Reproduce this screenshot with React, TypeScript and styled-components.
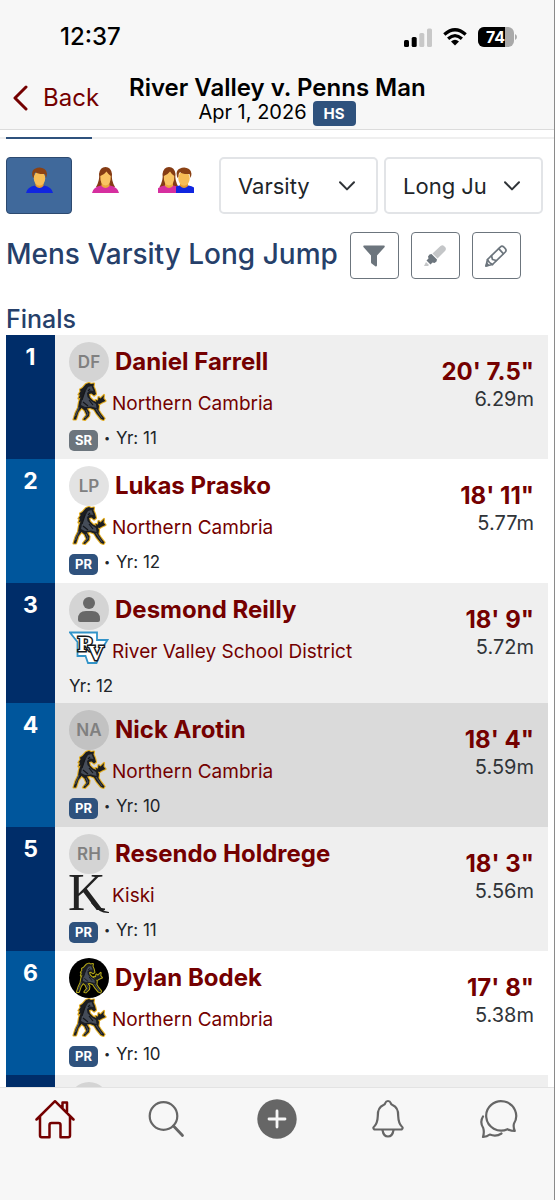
import React from 'react';
import styled, { createGlobalStyle } from 'styled-components';

const GlobalStyle = createGlobalStyle`
  *, *::before, *::after { box-sizing: border-box; }
  body { margin: 0; background: #fff; }
  body, button, select { font-family: Inter, 'Liberation Sans', sans-serif; }
  h1, h2, p { margin: 0; }
`;

const maroon = '#740000';
const navy = '#26406a';

const Screen = styled.div`
  display: flex;
  flex-direction: column;
  height: 100vh;
  background: #fff;
  border-right: 1px solid #8a8a8a;
`;

const Header = styled.header`
  flex: none;
  background: #f7f7f7;
  border-bottom: 1px solid #dcdcdc;
`;

const StatusBar = styled.div`
  display: flex;
  align-items: center;
  justify-content: space-between;
  height: 74px;
  padding: 0 37px 0 60px;
`;

const Clock = styled.time`
  font-size: 24px;
  font-weight: 500;
  line-height: 28px;
  color: #000;
`;

const StatusIcons = styled.div`
  display: flex;
  align-items: center;
  gap: 11px;
`;

const NavBar = styled.div`
  display: grid;
  grid-template-columns: 116px minmax(0, 1fr) 114px;
  align-items: start;
  height: 55px;
`;

const BackButton = styled.button`
  display: flex;
  align-items: center;
  gap: 15px;
  padding: 9px 0 0 12px;
  border: 0;
  background: none;
  color: ${maroon};
  font-size: 24px;
  line-height: 30px;
`;

const MeetInfo = styled.div`
  padding: 0 15px 0 13px;
  text-align: center;
`;

const MeetTitle = styled.h1`
  overflow: hidden;
  white-space: nowrap;
  text-align: left;
  font-size: 24px;
  font-weight: 600;
  line-height: 27px;
  color: #000;
`;

const MeetDate = styled.div`
  display: flex;
  align-items: flex-start;
  justify-content: center;
  gap: 6px;
  font-size: 20px;
  line-height: 22px;
  color: #000;
`;

const Badge = styled.span<{ $tone?: string; $large?: boolean }>`
  padding: 0 ${p => (p.$large ? 11 : 6)}px;
  border-radius: ${p => (p.$large ? 4 : 5)}px;
  background: ${p => p.$tone ?? '#2f527d'};
  color: #fff;
  font-size: ${p => (p.$large ? 15 : 13)}px;
  font-weight: 700;
  line-height: ${p => (p.$large ? 25 : 21)}px;
`;

const Main = styled.main`
  flex: 1;
  min-height: 0;
  overflow: hidden auto;
  scrollbar-width: none;
`;

const TabTrack = styled.div`
  margin-top: 7px;
  padding-left: 6px;
  background: #efefef;
`;

const TabMarker = styled.div`
  width: 86px;
  height: 2px;
  background: #2f527d;
`;

const Filters = styled.div`
  display: flex;
  gap: 6px;
  padding: 18px 11px 0 6px;
`;

const GenderGroup = styled.div`
  display: flex;
  flex: 1;
`;

const GenderButton = styled.button<{ $active?: boolean }>`
  display: flex;
  flex: 1 1 auto;
  justify-content: center;
  height: 57px;
  padding: 9px 18px 0;
  border: 1px solid ${p => (p.$active ? '#2d4a70' : 'transparent')};
  border-radius: 4px;
  background: ${p => (p.$active ? '#40699b' : 'transparent')};
`;

const SelectBox = styled.label`
  display: grid;
  align-items: center;
  width: 159px;
  color: #212529;

  > * { grid-area: 1 / 1; }
  > svg { justify-self: end; margin-right: 23px; pointer-events: none; }
`;

const Select = styled.select`
  appearance: none;
  width: 100%;
  height: 57px;
  padding: 0 53px 0 17px;
  border: 2px solid #e2e4e7;
  border-radius: 5px;
  background: #fff;
  color: #212529;
  font-size: 22px;
`;

const EventBar = styled.div`
  display: flex;
  align-items: center;
  gap: 12px;
  padding: 18px 6px 0;
`;

const EventTitle = styled.h2`
  padding-bottom: 4px;
  color: ${navy};
  font-size: 28px;
  font-weight: 500;
  line-height: 34px;
  white-space: nowrap;
`;

const ToolButton = styled.button`
  display: grid;
  flex: none;
  place-items: center;
  width: 49px;
  height: 47px;
  padding: 0;
  border: 1px solid #6c757d;
  border-radius: 4px;
  background: #fff;
`;

const Results = styled.table`
  width: calc(100% - 12px);
  margin: 24px 6px 0;
  border-collapse: collapse;
`;

const Round = styled.caption`
  color: ${navy};
  font-size: 25px;
  font-weight: 500;
  line-height: 32px;
  text-align: left;
`;

const Row = styled.tr<{ $shade: string; $rank: string }>`
  background: ${p => p.$shade};
  th { background: ${p => p.$rank}; }
`;

const Rank = styled.th`
  width: 49px;
  padding: 8px 0 0;
  vertical-align: top;
  color: #fff;
  font-size: 23px;
  font-weight: 700;
  line-height: 28px;
`;

const Athlete = styled.td`
  padding: 7px 0 7px 14px;
`;

const Line = styled.div`
  display: flex;
  align-items: center;
  height: 40px;
`;

const Avatar = styled.span<{ $bg?: string }>`
  display: grid;
  flex: none;
  place-items: center;
  width: 40px;
  height: 40px;
  border-radius: 50%;
  background: ${p => p.$bg ?? 'rgba(0, 0, 0, 0.11)'};
  color: #808080;
  font-size: 17px;
  font-weight: 600;
`;

const NameLink = styled.a`
  margin-left: 6px;
  color: ${maroon};
  font-size: 24px;
  font-weight: 700;
  line-height: 30px;
  text-decoration: none;
`;

const TeamLink = styled.a`
  margin: 4px 0 0 3px;
  color: ${maroon};
  font-size: 19px;
  line-height: 26px;
  text-decoration: none;
`;

const Meta = styled.div`
  display: flex;
  align-items: flex-start;
  padding-top: 6px;
  color: #212529;
  font-size: 17px;
  line-height: 20px;

  ${Badge} { margin: 2px 0 1px; }
`;

const Dot = styled.span`
  width: 18px;
  text-align: center;
  font-size: 11px;
`;

const MarkCell = styled.td`
  padding: 22px 14px 0 0;
  vertical-align: top;
  text-align: right;
  white-space: nowrap;
`;

const MarkLink = styled.a`
  display: block;
  color: ${maroon};
  font-size: 24px;
  font-weight: 700;
  line-height: 30px;
  text-decoration: none;
`;

const Metric = styled.div`
  color: #303438;
  font-size: 20px;
  line-height: 24px;
`;

const TabBar = styled.nav`
  display: grid;
  flex: none;
  grid-template-columns: repeat(5, 1fr);
  align-items: start;
  padding: 11px 0 61px;
  border-top: 1px solid #e3e3e3;
  background: #f7f7f7;
`;

const TabLink = styled.a<{ $active?: boolean }>`
  display: grid;
  justify-items: center;
  color: ${p => (p.$active ? maroon : '#666')};
`;

const SignalIcon = () => (
  <svg width="28" height="19" viewBox="0 0 28 19">
    <rect x="0" y="12" width="5" height="7" rx="1.5" />
    <rect x="7.7" y="9" width="5" height="10" rx="1.5" />
    <rect x="15.3" y="5" width="5" height="14" rx="1.5" fill="#c8c8c8" />
    <rect x="23" y="0.5" width="5" height="18.5" rx="1.5" fill="#c8c8c8" />
  </svg>
);

const WifiIcon = () => (
  <svg width="24" height="18" viewBox="0 0 24 18" fill="none" stroke="#000" strokeWidth="3.2">
    <path d="M1.3 6.5Q12-3 22.7 6.5" />
    <path d="M5.1 10.7Q12 4.6 18.9 10.7" />
    <path d="M12 17.5L8 13.4Q12 10 16 13.4Z" fill="#000" stroke="none" />
  </svg>
);

const BatteryIcon = () => (
  <svg width="39" height="20" viewBox="0 0 39 20">
    <rect width="36" height="20" rx="6" fill="#a9a9a9" />
    <path d="M6 0H27V20H6A6 6 0 0 1 0 14V6A6 6 0 0 1 6 0Z" />
    <path d="M37 7Q39 8 39 10T37 13Z" fill="#a9a9a9" />
    <text x="17.5" y="15.5" fill="#fff" fontFamily="Inter, sans-serif" fontSize="16" fontWeight="700" textAnchor="middle">74</text>
  </svg>
);

const Chevron = () => (
  <svg width="16" height="10" viewBox="0 0 16 10" fill="none" stroke="#2f3337" strokeWidth="2" strokeLinecap="round" strokeLinejoin="round">
    <path d="M1 1.2L8 8.4L15 1.2" />
  </svg>
);

const Man = () => (
  <>
    <path d="M0 26Q1 20 9 18.5H18Q26 20 27 26Z" fill="#1026e0" />
    <path d="M9.5 16H17.5V19Q13.5 23 9.5 19Z" fill="#e59a2e" />
    <ellipse cx="13.5" cy="11.5" rx="5.7" ry="7.3" fill="#f7bd55" />
    <path d="M7 11Q4.5 4 9 1.8Q14-1 18.5 2Q22.5 5 20 11L19 7Q12 7.5 9.5 5Q8 6 7.8 10Z" fill="#8b4214" />
  </>
);

const Woman = () => (
  <>
    <path d="M4 20Q8 13 7 7Q8 0 13.5 0T20 7Q19 13 23 20L18 22H9Z" fill="#853c14" />
    <path d="M0 26Q1 20 9 18.5H18Q26 20 27 26Z" fill="#d62f9f" />
    <path d="M9.5 15H17.5V19Q13.5 23 9.5 19Z" fill="#eba63e" />
    <path d="M8.3 9Q12 8 14.5 4.5Q16 7 18.8 9Q19 18 13.5 18.5Q8 18 8.3 9Z" fill="#f9c363" />
  </>
);

const ManIcon = () => <svg width="27" height="26" viewBox="0 0 27 26"><Man /></svg>;
const WomanIcon = () => <svg width="27" height="26" viewBox="0 0 27 26"><Woman /></svg>;
const PairIcon = () => (
  <svg width="36" height="26" viewBox="0 0 36 26">
    <g transform="translate(-2.5 0)"><Woman /></g>
    <svg x="18" y="0" width="18" height="26" viewBox="5.5 0 18 26" overflow="hidden">
      <Man />
    </svg>
  </svg>
);

const FunnelIcon = () => (
  <svg width="22" height="22" viewBox="0 0 22 22" fill="#6c757d">
    <path d="M1 0.5H21Q22 0.5 21.7 2L14 10.5V20.5Q13.5 22 12.3 21.3L8.6 18.5Q8 18 8 17V10.5L0.4 2Q0 0.5 1 0.5Z" />
  </svg>
);

const HighlighterIcon = () => (
  <svg width="22" height="22" viewBox="0 0 22 22">
    <path d="M8.500 8.500L16.500 1Q18.5-0.500 20 1L21.5 2.500Q22.500 4.5 21 6L13.500 13.5Z" fill="#c4c6c8" />
    <path d="M7.5 9L13 14.5L12.5 16.5L10.5 18L8.5 17.5L6.5 19.5L2.500 15.5L4.5 13.5L4 11.5L5.5 9.5Z" fill="#6c757d" />
    <path d="M2 17L5 20L4 21H0Z" fill="#c4c6c8" />
  </svg>
);

const PencilIcon = () => (
  <svg width="22" height="22" viewBox="0 0 22 22" fill="none" stroke="#6c757d" strokeWidth="1.7" strokeLinejoin="round" strokeLinecap="round">
    <path d="M1 21L2.5 14.5L15.5 1.8Q17 0.5 18.8 2L20.3 3.6Q21.8 5.4 20.3 7L7.5 19.5Z" />
    <path d="M2.5 14.5Q3.5 17.5 7.5 19.5M6.5 10.7L7.5 14.5L11.3 15.5M13.7 3.7L18.3 8.7" />
    <path d="M1 21L2 18.5L3.5 20.2Z" fill="#6c757d" />
  </svg>
);

const horseBody =
  'M17 2L20 1L22 2L25 1.500L24.5 4.5L26 8L27 12L25 13.5L22.5 11.500L20 12L21 15.5L24 18.5L28.5 20.5L30 24L29.5 28L32 32L35.5 36.5L34.5 38L32 37L27.5 31.5L25 27.5L21 26L18 26.5L20.5 30.5L20 34L16 38L14 37.5L17.5 33L15.5 28.5L12.500 26L9.5 30L7 37.5L4.500 37.5L6.500 31L9 26L10 20L11.500 15.5L9.500 16.500L11 12.5L9.500 12.500L11.5 9.5L11 7.5L13.5 6Z';
const horseTail = 'M28 21.5L26.5 18L29 18.5L29.5 15L31.5 16.5L35 13L34.5 16.5L36.5 19L33 20.5L30.5 22Z';

const Mustang = ({ outline = '#e3ae24', small = false }) => (
  <svg width={small ? 28 : 40} height={small ? 34 : 40} viewBox={small ? '2 -1 36 41' : '0 0 40 40'} strokeLinejoin="round">
    <g fill={outline} stroke={outline} strokeWidth={small ? 2.6 : 2.2}>
      <path d={horseBody} />
      <path d={horseTail} />
    </g>
    <path d={horseBody} fill="#1b1d21" />
    <path d={horseTail} fill="#1b1d21" />
    <path d="M19 5L22.5 4L24.5 9L21 8.5L18 11L18.5 15L22 19L27 22L27.5 26L22 24.5L16 25L12 23L13 18L15 12Z" fill="#454c58" />
    <path d="M10 25L6.5 34M27 27L33 36M17 28L19 32L16 36" fill="none" stroke="#454c58" strokeWidth="1.1" />
    <path d="M16 9L13 18M21 7L19 9M14 20L19 24M20 18L24 23" fill="none" stroke="#14161a" strokeWidth="1.2" />
  </svg>
);

const RiverValleyLogo = () => (
  <svg width="40" height="40" viewBox="0 0 40 40" strokeLinejoin="miter">
    <path d="M1 2.5H28V10H38.5L34 17L27.5 33H19L16.5 26H8.5V12Z" fill="#fff" stroke="#3293c8" strokeWidth="1.8" />
    <g fontFamily="'Liberation Serif', serif" fontWeight="700" fill="#fff" stroke="#15181c" strokeWidth="3" paintOrder="stroke">
      <text x="9" y="21" fontSize="22">R</text>
      <text x="19" y="30" fontSize="22">V</text>
    </g>
  </svg>
);

const KiskiLogo = () => (
  <svg width="40" height="40" viewBox="0 0 40 40" fill="#222" overflow="visible">
    <text x="-1" y="36" fontFamily="'Liberation Serif', serif" fontSize="52">K</text>
    <path d="M23 25Q31 37 40 38V39Q31 40 22 29Z" />
  </svg>
);

const PersonIcon = () => (
  <svg width="22" height="27" viewBox="0 0 22 27" fill="#686868">
    <circle cx="11" cy="6" r="6" />
    <path d="M0 22Q0 14 8 14H14Q22 14 22 22V23Q22 25 20 25H2Q0 25 0 23Z" />
  </svg>
);

const lineIcon = {
  width: 40,
  height: 40,
  viewBox: '0 0 40 40',
  fill: 'none',
  stroke: 'currentColor',
  strokeWidth: 2.2,
  strokeLinecap: 'round' as const,
  strokeLinejoin: 'round' as const,
};

const HomeIcon = () => (
  <svg {...lineIcon} strokeWidth={2.5}>
    <path d="M1.5 20.5L20 2.2L38.5 20.5M5 17.5V36.5Q5 38.2 6.7 38.2H14.5V26Q14.5 24 16.5 24H23.5Q25.5 24 25.5 26V38.2H33.3Q35 38.2 35 36.5V17.5M27.5 9V3.5H32V14" />
  </svg>
);

const SearchIcon = () => (
  <svg {...lineIcon}>
    <circle cx="17.5" cy="17" r="13.8" />
    <path d="M27.5 27L36.5 36.5" strokeWidth="2.8" />
  </svg>
);

const AddIcon = () => (
  <svg {...lineIcon} stroke="none">
    <circle cx="20" cy="20" r="19.7" fill="currentColor" />
    <path d="M20 12V28M12 20H28" stroke="#f7f7f7" strokeWidth="2.8" />
  </svg>
);

const BellIcon = () => (
  <svg {...lineIcon}>
    <path d="M6.5 30.5Q4.3 29 6.2 27.5Q9.5 24.5 9.8 17Q9.5 8.5 15.5 6Q17 5.5 17.3 4Q18 2 20 2T22.7 4Q23 5.5 24.5 6Q30.5 8.5 30.2 17Q30.5 24.5 33.8 27.5Q35.7 29 33.5 30.5Z" />
    <path d="M14.5 31Q15.5 37.5 20 37.5T25.5 31" />
  </svg>
);

const ChatIcon = () => (
  <svg {...lineIcon}>
    <path d="M35 24.5A15 14.7 0 1 0 28.5 30.2Q32 32 35.8 32Q34 28 35 24.5Z" />
    <path d="M4 17.5Q0.5 23 4.2 29Q5.5 33 4 38Q8 37.8 10.8 35.5Q17 38 22.5 34.5" />
  </svg>
);

type TeamKey = 'nc' | 'rv' | 'kiski';
const teams: Record<TeamKey, { name: string; Logo: React.FC }> = {
  nc: { name: 'Northern Cambria', Logo: Mustang },
  rv: { name: 'River Valley School District', Logo: RiverValleyLogo },
  kiski: { name: 'Kiski', Logo: KiskiLogo },
};

type Result = {
  name: string;
  initials?: string;
  photo?: 'person' | 'mustang';
  team: TeamKey;
  badge?: 'SR' | 'PR';
  year: number;
  mark: string;
  metric: string;
  highlight?: boolean;
};

const results: Result[] = [
  { name: 'Daniel Farrell', initials: 'DF', team: 'nc', badge: 'SR', year: 11, mark: `20' 7.5"`, metric: '6.29m' },
  { name: 'Lukas Prasko', initials: 'LP', team: 'nc', badge: 'PR', year: 12, mark: `18' 11"`, metric: '5.77m' },
  { name: 'Desmond Reilly', photo: 'person', team: 'rv', year: 12, mark: `18' 9"`, metric: '5.72m' },
  { name: 'Nick Arotin', initials: 'NA', team: 'nc', badge: 'PR', year: 10, mark: `18' 4"`, metric: '5.59m', highlight: true },
  { name: 'Resendo Holdrege', initials: 'RH', team: 'kiski', badge: 'PR', year: 11, mark: `18' 3"`, metric: '5.56m' },
  { name: 'Dylan Bodek', photo: 'mustang', team: 'nc', badge: 'PR', year: 10, mark: `17' 8"`, metric: '5.38m' },
];

const shadeFor = (index: number, highlight?: boolean) =>
  highlight ? '#dadada' : index % 2 === 0 ? '#efefef' : '#fff';
const rankColor = (index: number) => (index % 2 === 0 ? '#002d69' : '#00569c');

const ResultRow = ({ result, index }: { result: Result; index: number }) => {
  const { name: teamName, Logo } = teams[result.team];
  return (
    <Row $shade={shadeFor(index, result.highlight)} $rank={rankColor(index)}>
      <Rank scope="row">{index + 1}</Rank>
      <Athlete>
        <Line>
          <Avatar $bg={result.photo === 'mustang' ? '#000' : undefined}>
            {result.initials}
            {result.photo === 'person' && <PersonIcon />}
            {result.photo === 'mustang' && <Mustang outline="#b6aa16" small />}
          </Avatar>
          <NameLink href="#athlete">{result.name}</NameLink>
        </Line>
        <Line>
          <Logo />
          <TeamLink href="#team">{teamName}</TeamLink>
        </Line>
        <Meta>
          {result.badge && (
            <>
              <Badge $tone={result.badge === 'SR' ? '#6c757d' : undefined}>{result.badge}</Badge>
              <Dot>•</Dot>
            </>
          )}
          <span>Yr: {result.year}</span>
        </Meta>
      </Athlete>
      <MarkCell>
        <MarkLink href="#mark">{result.mark}</MarkLink>
        <Metric>{result.metric}</Metric>
      </MarkCell>
    </Row>
  );
};

export default function App() {
  return (
    <>
      <GlobalStyle />
      <Screen>
        <Header>
          <StatusBar>
            <Clock>12:37</Clock>
            <StatusIcons>
              <SignalIcon />
              <WifiIcon />
              <BatteryIcon />
            </StatusIcons>
          </StatusBar>
          <NavBar>
            <BackButton type="button">
              <svg width="16" height="26" viewBox="0 0 16 26" fill="none" stroke="currentColor" strokeWidth="3" strokeLinecap="round" strokeLinejoin="round">
                <path d="M14 2L3 13L14 24" />
              </svg>
              Back
            </BackButton>
            <MeetInfo>
              <MeetTitle>River Valley v. Penns Manor</MeetTitle>
              <MeetDate>
                Apr 1, 2026
                <Badge $large>HS</Badge>
              </MeetDate>
            </MeetInfo>
          </NavBar>
        </Header>

        <Main>
          <TabTrack><TabMarker /></TabTrack>
          <Filters>
            <GenderGroup>
              <GenderButton type="button" aria-label="Mens" aria-pressed="true" $active><ManIcon /></GenderButton>
              <GenderButton type="button" aria-label="Womens" aria-pressed="false"><WomanIcon /></GenderButton>
              <GenderButton type="button" aria-label="Mixed" aria-pressed="false"><PairIcon /></GenderButton>
            </GenderGroup>
            <SelectBox>
              <Select aria-label="Division" defaultValue="Varsity"><option>Varsity</option></Select>
              <Chevron />
            </SelectBox>
            <SelectBox>
              <Select aria-label="Event" defaultValue="Long Jump"><option>Long Jump</option></Select>
              <Chevron />
            </SelectBox>
          </Filters>
          <EventBar>
            <EventTitle>Mens Varsity Long Jump</EventTitle>
            <ToolButton type="button" aria-label="Filter"><FunnelIcon /></ToolButton>
            <ToolButton type="button" aria-label="Highlight"><HighlighterIcon /></ToolButton>
            <ToolButton type="button" aria-label="Edit"><PencilIcon /></ToolButton>
          </EventBar>
          <Results>
            <Round>Finals</Round>
            <tbody>
              {results.map((result, index) => (
                <ResultRow key={result.name} result={result} index={index} />
              ))}
              <Row $shade="#efefef" $rank={rankColor(6)}>
                <Rank scope="row" />
                <Athlete><Line><Avatar /></Line></Athlete>
                <MarkCell />
              </Row>
            </tbody>
          </Results>
        </Main>

        <TabBar>
          <TabLink href="#home" aria-label="Home" $active><HomeIcon /></TabLink>
          <TabLink href="#search" aria-label="Search"><SearchIcon /></TabLink>
          <TabLink href="#add" aria-label="Add"><AddIcon /></TabLink>
          <TabLink href="#alerts" aria-label="Notifications"><BellIcon /></TabLink>
          <TabLink href="#chat" aria-label="Messages"><ChatIcon /></TabLink>
        </TabBar>
      </Screen>
    </>
  );
}
